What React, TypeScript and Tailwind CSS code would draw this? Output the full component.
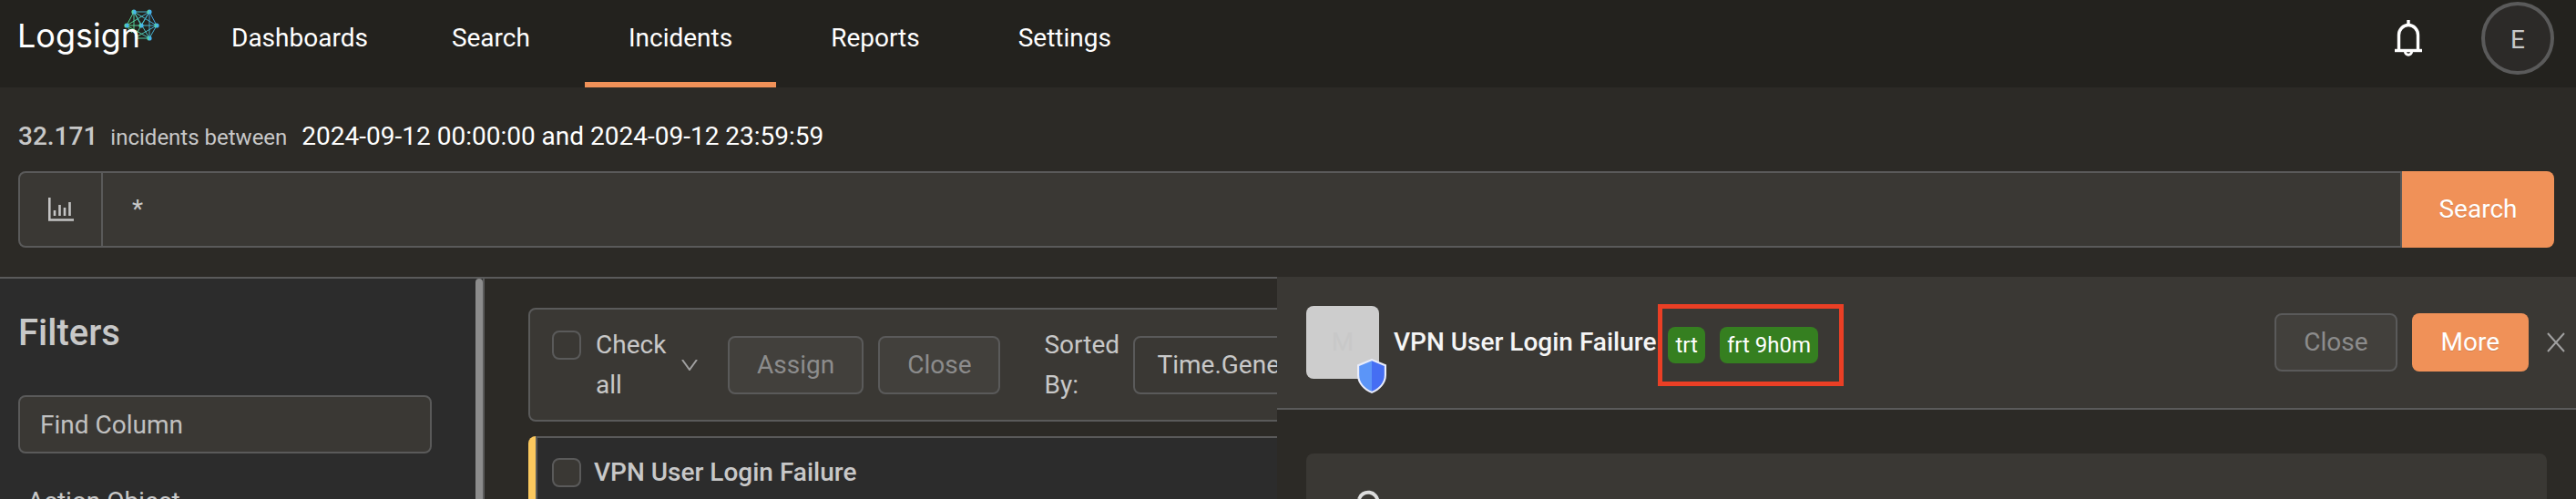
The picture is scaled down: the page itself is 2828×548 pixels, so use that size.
import React from 'react';

const navItems = ['Dashboards', 'Search', 'Incidents', 'Reports', 'Settings'];

const hubNodes = [
  [147, 13],
  [164, 13],
  [139, 28],
  [155, 28],
  [172, 28],
  [164, 42],
];

const hubEdges = [
  [147, 13, 164, 13],
  [147, 13, 139, 28],
  [147, 13, 147, 34],
  [147, 13, 155, 28],
  [147, 13, 172, 28],
  [147, 13, 164, 42],
  [164, 13, 172, 28],
  [164, 13, 139, 28],
  [164, 13, 155, 28],
  [164, 13, 164, 42],
  [164, 13, 148, 40],
  [139, 28, 172, 28],
  [139, 28, 164, 42],
  [139, 28, 145, 36],
  [172, 28, 164, 42],
  [172, 28, 149, 41],
  [151, 42, 164, 42],
];

function Logo() {
  return (
    <svg width="180" height="72" viewBox="0 0 180 72" role="img" aria-label="Logsign">
      <defs>
        <linearGradient id="hub" gradientUnits="userSpaceOnUse" x1="139" y1="34" x2="172" y2="22">
          <stop offset="0" stopColor="#5fe06a" />
          <stop offset="0.5" stopColor="#4bc0b8" />
          <stop offset="1" stopColor="#3f9be8" />
        </linearGradient>
        <linearGradient id="node" x1="0" x2="1">
          <stop offset="0" stopColor="#5ce08a" />
          <stop offset="0.6" stopColor="#46b4ee" />
        </linearGradient>
      </defs>
      <path d={hubEdges.map(([a, b, c, d]) => `M${a} ${b}L${c} ${d}`).join('')} stroke="url(#hub)" strokeWidth="1" fill="none" />
      {hubNodes.map(([x, y]) => (
        <circle key={`${x}-${y}`} cx={x} cy={y} r="2.6" fill="url(#node)" />
      ))}
      <text x="19" y="52" fontFamily="Inter, sans-serif" fontSize="36" fill="#ffffff">Logsign</text>
    </svg>
  );
}

function BellIcon() {
  return (
    <svg width="32" height="42" viewBox="0 0 32 42" fill="none" stroke="#ffffff" strokeWidth="3.4">
      <path d="M16 1v5" />
      <path d="M5.5 34V17.500a10.500 11 0 0 1 21 0V34" />
      <path d="M1 34.500h30" />
      <path d="M12.500 36a3.500 3.200 0 0 0 7 0" strokeWidth="3" />
    </svg>
  );
}

function ChartIcon() {
  return (
    <svg width="28" height="26" viewBox="0 0 28 26" fill="none" stroke="#c3c3c3" strokeWidth="2.600">
      <path d="M1.300 0v24.500H28" />
      <path d="M7 14v6M12.500 8v12M18 11v9M23.500 5v15" />
    </svg>
  );
}

function ShieldIcon() {
  return (
    <svg width="32" height="38" viewBox="0 0 32 38">
      <path d="M16 0L32 6.500V18C32 27 25 34.500 16 38C7 34.500 0 27 0 18V6.500Z" fill="#e8ecfb" />
      <path d="M16 2.300L2.200 8V18C2.200 26 8 32.500 16 35.800Z" fill="#5b95f8" />
      <path d="M16 2.300L29.800 8V18C29.800 26 24 32.500 16 35.800Z" fill="#456ef3" />
    </svg>
  );
}

function Checkbox({ id, label }: { id: string; label?: string }) {
  return (
    <input
      id={id}
      type="checkbox"
      aria-label={label}
      className="mt-[6px] size-8 shrink-0 appearance-none rounded-lg border-2 border-[#5a5a5a] bg-[#3a3834]"
    />
  );
}

function GhostButton({ children }: { children: React.ReactNode }) {
  return (
    <button className="h-16 shrink-0 rounded-lg border-2 border-[#5a5a5a] bg-[#42403c] px-[30px] text-[#8c8c8c]">
      {children}
    </button>
  );
}

export default function App() {
  return (
    <div className="flex h-screen flex-col overflow-hidden bg-[#2c2a26] font-[Roboto,sans-serif] text-[28px] leading-[44px] text-[#c8c8c8]">
      <header className="flex h-24 shrink-0 items-start bg-[#23221e] pr-6">
        <a href="#" className="mr-[26px]">
          <Logo />
        </a>
        <nav className="flex h-full gap-3">
          {navItems.map((item) => (
            <a
              key={item}
              href="#"
              className={
                item === 'Incidents'
                  ? 'border-b-6 border-[#f09158] px-12 pt-5 text-white'
                  : 'border-b-6 border-transparent px-12 pt-5 text-white first:pr-8'
              }
            >
              {item}
            </a>
          ))}
        </nav>
        <div className="ml-auto flex items-center gap-16 pt-[2px]">
          <button aria-label="Notifications">
            <BellIcon />
          </button>
          <button className="size-20 rounded-full border-4 border-[#5a5a5a] bg-[#2c2a28] pt-1">E</button>
        </div>
      </header>

      {/* Query bar */}
      <div className="shrink-0 py-8 pr-6 pl-5">
        <div className="flex h-11 items-baseline">
          <strong className="font-medium">32.171</strong>
          <span className="ml-[14px] text-2xl leading-[44px]">incidents between</span>
          <span className="ml-4 text-white">2024-09-12 00:00:00 and 2024-09-12 23:59:59</span>
        </div>
        <form className="mt-4 flex h-[84px]">
          <button
            type="button"
            aria-label="Chart"
            className="flex w-[93px] items-center justify-center rounded-l-lg border-2 border-[#5a5a5a] bg-[#3a3834]"
          >
            <ChartIcon />
          </button>
          <input
            type="text"
            aria-label="Query"
            defaultValue="*"
            className="min-w-0 flex-1 border-y-2 border-r-2 border-[#5a5a5a] bg-[#3a3834] px-8"
          />
          <button type="button" className="w-[167px] rounded-r-lg bg-[#f09158] text-white text-shadow-2xs">
            Search
          </button>
        </form>
      </div>

      <div className="flex min-h-0 flex-1">
        <aside className="flex w-[532px] shrink-0 overflow-hidden border-t-2 border-r-2 border-[#5a5a5a] bg-[#2c2c2c]">
          <div className="min-w-0 flex-1 pt-8 pr-12 pl-5">
            <h2 className="text-[40px] leading-[56px] font-medium">Filters</h2>
            <input
              type="text"
              aria-label="Find Column"
              placeholder="Find Column"
              className="mt-10 h-16 w-full rounded-lg border-2 border-[#5a5a5a] bg-[#3a3834] px-[22px] placeholder:text-[#c0c0c0]"
            />
            <div className="mt-[31px] pl-[10px]">Action Object</div>
          </div>
          <div className="w-2 rounded-t-full bg-[#8c8c8c]" />
        </aside>

        <section className="min-w-0 flex-1 overflow-hidden border-t-2 border-[#5a5a5a] pt-8 pl-12">
          <div className="flex h-[125px] w-[1200px] items-center rounded-lg border-2 border-[#5a5a5a] bg-[#3a3834] pl-6">
            <label htmlFor="check-all" className="flex w-[130px] items-start gap-4">
              <Checkbox id="check-all" />
              <span className="w-20">Check all</span>
            </label>
            <svg className="mr-[33px] ml-3" width="18" height="12" viewBox="0 0 18 12" fill="none" stroke="#a0a0a0" strokeWidth="2">
              <path d="M1 0L9 11L17 0" />
            </svg>
            <div className="flex gap-4">
              <GhostButton>Assign</GhostButton>
              <GhostButton>Close</GhostButton>
            </div>
            <label htmlFor="sort" className="mr-4 ml-12 w-[82px]">
              Sorted By:
            </label>
            <select
              id="sort"
              className="h-16 flex-1 appearance-none rounded-lg border-2 border-[#5a5a5a] bg-[#3a3834] px-6"
            >
              <option>Time.Generated</option>
            </select>
          </div>
          <article className="mt-4 flex h-40 w-[1200px] overflow-hidden rounded-lg bg-[#2c2c2c]">
            <div className="w-2 bg-[#fbc85e]" />
            <div className="flex flex-1 items-start gap-[14px] border-2 border-[#5a5a5a] px-4 pt-4">
              <Checkbox id="incident" label="Select incident" />
              <strong className="font-medium">VPN User Login Failure</strong>
            </div>
          </article>
        </section>

        <div className="w-[1426px] shrink-0 overflow-hidden">
          <div className="flex h-[146px] items-center border-b-2 border-[#5a5a5a] bg-[#3a3834] pr-3 pl-8">
            <div className="relative flex size-20 items-center justify-center rounded-lg bg-[#cdcdcd] text-[#c8c8c8]">
              M
              <span className="absolute -right-2 -bottom-4">
                <ShieldIcon />
              </span>
            </div>
            <strong className="ml-4 font-medium text-[#f5f5f5]">VPN User Login Failure</strong>
            <div className="mt-[6px] ml-[2px] flex h-[90px] w-[204px] items-center gap-4 border-[5px] border-[#ea3f25] pl-[6px] text-2xl text-white">
              <span className="rounded-lg bg-[#357f20] px-2 leading-10">trt</span>
              <span className="rounded-lg bg-[#357f20] px-2 leading-10">frt 9h0m</span>
            </div>
            <div className="ml-auto flex items-center gap-4">
              <GhostButton>Close</GhostButton>
              <button className="h-16 rounded-lg bg-[#f09158] px-8 text-white text-shadow-2xs">More</button>
              <button aria-label="Dismiss" className="ml-1">
                <svg width="20" height="22" viewBox="0 0 20 22" fill="none" stroke="#a0a0a0" strokeWidth="2">
                  <path d="M1 1L19 21M19 1L1 21" />
                </svg>
              </button>
            </div>
          </div>
          <div className="mx-8 mt-12 h-40 rounded-lg bg-[#3a3834] pt-10 pl-14">
            <svg width="28" height="32" viewBox="0 0 28 32" fill="none" stroke="#dcdcdc" strokeWidth="4">
              <path d="M2 10a10.500 10.500 0 0 1 20.500 3v14" />
            </svg>
          </div>
        </div>
      </div>
    </div>
  );
}
